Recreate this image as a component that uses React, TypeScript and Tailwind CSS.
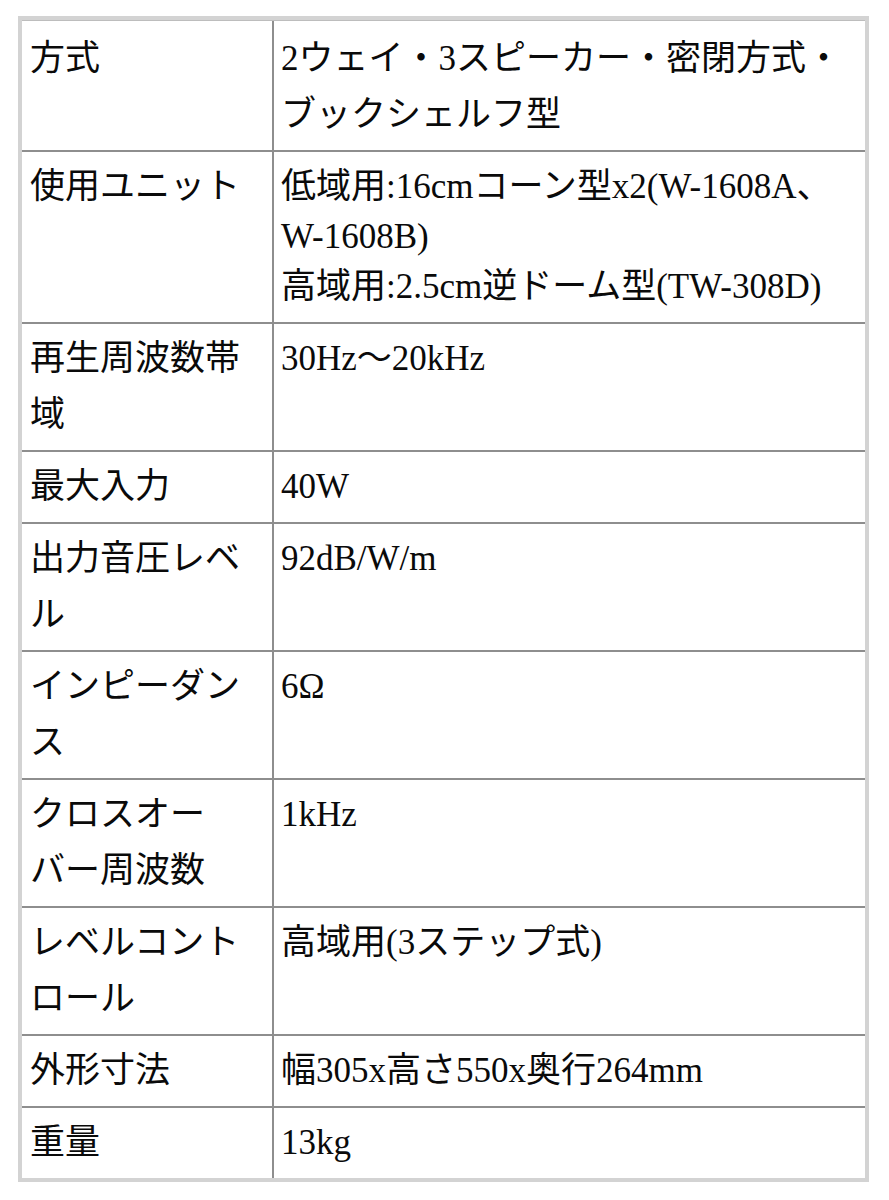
const rows: { label: string[]; value: string[]; short?: number[] }[] = [
  { label: ["方式"], value: ["2ウェイ・3スピーカー・密閉方式・", "ブックシェルフ型"] },
  {
    label: ["使用ユニット"],
    value: ["低域用:16cmコーン型x2(W-1608A、", "W-1608B)", "高域用:2.5cm逆ドーム型(TW-308D)"],
    short: [1],
  },
  { label: ["再生周波数帯", "域"], value: ["30Hz〜20kHz"] },
  { label: ["最大入力"], value: ["40W"] },
  { label: ["出力音圧レベ", "ル"], value: ["92dB/W/m"] },
  { label: ["インピーダン", "ス"], value: ["6Ω"] },
  { label: ["クロスオー", "バー周波数"], value: ["1kHz"] },
  { label: ["レベルコント", "ロール"], value: ["高域用(3ステップ式)"] },
  { label: ["外形寸法"], value: ["幅305x高さ550x奥行264mm"] },
  { label: ["重量"], value: ["13kg"] },
];

function Lines({ lines, short = [] }: { lines: string[]; short?: number[] }) {
  return (
    <>
      {lines.map((l, i) => (
        <div
          key={i}
          className={`whitespace-nowrap ${short.includes(i) ? "leading-[44px]" : "leading-[56px]"}`}
        >
          {l}
        </div>
      ))}
    </>
  );
}

export default function App() {
  return (
    <div className="min-h-[1200px] bg-white pt-[16px] pl-[18px]">
      <div
        className="w-[851px] border-4 border-[#d3d3d3] text-[35px] text-[#0a0a0a]"
        style={{ fontFamily: '"Liberation Serif", "Noto Sans CJK JP", serif' }}
      >
        {rows.map((r, i) => (
          <div
            key={i}
            className={`flex ${i === 0 ? "border-t border-t-[#bdbdbd]" : "border-t-2 border-t-[#8e8e8e]"}`}
          >
            <div
              className={`w-[252px] shrink-0 border-r-2 border-r-[#8e8e8e] pl-[8px] ${
                i === 0 ? "pt-[10px] pb-[7px]" : "py-[7px]"
              }`}
            >
              <Lines lines={r.label} />
            </div>
            <div className={`flex-1 pl-[7px] ${i === 0 ? "pt-[10px] pb-[7px]" : "py-[7px]"}`}>
              <Lines lines={r.value} short={r.short} />
            </div>
          </div>
        ))}
      </div>
    </div>
  );
}
